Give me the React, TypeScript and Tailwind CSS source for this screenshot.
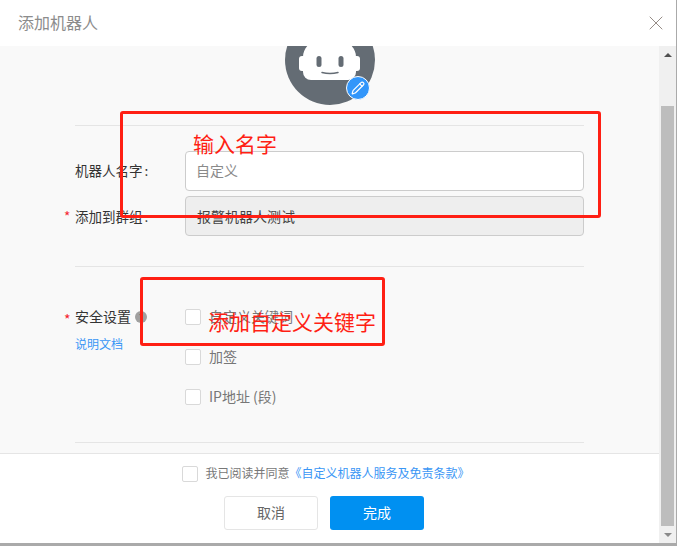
import React from 'react';
import { Pencil, X } from 'lucide-react';

const cjk = { fontFamily: '"Noto Sans CJK SC", "Noto Sans", sans-serif' };

function Robot() {
  return (
    <svg width="90" height="90" viewBox="0 0 90 90" className="block">
      <circle cx="45" cy="45" r="45" fill="#646c74" />
      <rect x="14" y="41" width="61" height="15" rx="3" fill="#fff" />
      <path
        d="M18 42C18 32 28 22 44.500 22C61 22 71 32 71 42V57a8 8 0 0 1-8 8H26a8 8 0 0 1-8-8z"
        fill="#fff"
      />
      <rect x="31.500" y="41" width="5" height="11" rx="2.500" fill="#646c74" />
      <rect x="53.500" y="41" width="5" height="11" rx="2.500" fill="#646c74" />
      <path d="M37 57.500c5 1.300 11 1.300 16 0" stroke="#646c74" strokeWidth="1.500" fill="none" strokeLinecap="round" />
    </svg>
  );
}

function Check({ label }: { label: string }) {
  return (
    <label className="flex items-center h-4 text-[14px] text-[#777] whitespace-nowrap">
      <span className="w-4 h-4 mr-2 bg-white border border-[#d9d9d9] rounded-[2px]" />
      <span className="-mt-[2px]">{label}</span>
    </label>
  );
}

export default function App() {
  return (
    <div className="relative w-[677px] h-[546px] overflow-hidden bg-[#aaaaaa]" style={cjk}>
      <div className="flex flex-col w-[676px] h-[543px] bg-white">
        <header className="flex items-center justify-between h-[46px] shrink-0 pl-[18px] pr-[8px] bg-white">
          <h1 className="text-[16px] font-normal text-[#8c8c8c] -mt-[2px]">添加机器人</h1>
          <X size={24} strokeWidth={0.9} className="text-[#8a7f78]" />
        </header>

        <div className="flex flex-1 min-h-0">
          <div className="flex flex-col flex-1 min-w-0">
            <main className="h-[407px] overflow-hidden bg-[#f9f9f9] px-[75px]">
              <div className="relative w-[90px] h-[90px] mx-auto -mt-[31px] left-[0.5px]">
                <Robot />
                <span className="absolute left-[61px] top-[61px] flex items-center justify-center w-6 h-6 rounded-full bg-[#3296fa] border border-white">
                  <Pencil size={14} strokeWidth={2} className="text-white" />
                </span>
              </div>

              <hr className="mt-[20px] w-[509px] border-[#e5e5e5]" />

              <div className="flex flex-col gap-[5px] w-[509px] mt-[25px]">
                <div className="flex items-center">
                  <span className="w-[110px] -mt-[2px] text-[13.500px] text-[#333]">机器人名字<span className="ml-[2px]">:</span></span>
                  <div className="flex items-center flex-1 h-[40px] px-[10px] pb-[2px] bg-white border border-[#cccccc] rounded-[4px] text-[14px] text-[#8a8a8a]">
                    自定义
                  </div>
                </div>
                <div className="flex items-center">
                  <span className="relative w-[110px] text-[13.500px] text-[#333]">
                    <span className="absolute -left-[11px] top-0 text-[#f5222d]">*</span>
                    添加到群组<span className="ml-[2px]">:</span>
                  </span>
                  <div className="flex items-center flex-1 h-[40px] px-[11px] bg-[#eeeeee] border border-[#cccccc] rounded-[4px] text-[14px] text-[#444]">
                    报警机器人测试
                  </div>
                </div>
              </div>

              <hr className="mt-[30px] w-[509px] border-[#e5e5e5]" />

              <div className="flex w-[509px] mt-[42px]">
                <div className="w-[110px]">
                  <div className="relative flex items-center h-4 text-[14px] text-[#333]">
                    <span className="absolute -left-[11px] top-0 text-[#f5222d]">*</span>
                    <span className="-mt-[1px]">安全设置</span>
                    <span className="flex items-center justify-center w-3 h-3 ml-[4px] rounded-full bg-[#a0a0a0] text-[9px] leading-none text-[#666]">?</span>
                  </div>
                  <a className="block mt-[11px] text-[12px] leading-4 text-[#3a96f5]">说明文档</a>
                </div>
                <div className="flex flex-col gap-6">
                  <Check label="自定义关键词" />
                  <Check label="加签" />
                  <Check label="IP地址 (段)" />
                </div>
              </div>

              <hr className="mt-[37px] w-[509px] border-[#e5e5e5]" />
            </main>

            <footer className="flex flex-col items-center flex-1 bg-white border-t border-[#e5e5e5]">
              <div className="flex items-center h-4 mt-[12px] -ml-[7px] text-[12px] text-[#777]">
                <span className="w-4 h-4 mr-[7px] bg-white border border-[#d9d9d9] rounded-[2px]" />
                <span className="-mt-[2px]">我已阅读并同意</span>
                <a className="-mt-[2px] text-[#3a96f5]">《自定义机器人服务及免责条款》</a>
              </div>
              <div className="flex gap-3 mt-[14px] -ml-[11px]">
                <button className="w-[94px] h-[34px] pb-[2px] bg-white border border-[#e5e5e5] rounded-[3px] text-[14px] text-[#666]">
                  取消
                </button>
                <button className="w-[94px] h-[34px] pb-[2px] bg-[#0090f1] rounded-[3px] text-[14px] text-white">
                  完成
                </button>
              </div>
            </footer>
          </div>

          <aside className="flex flex-col items-center w-[17px] shrink-0 bg-[#f0f0f0]">
            <div className="flex justify-center h-[60px] w-full shrink-0">
              <span className="mt-[7px] w-0 h-0 border-x-[4px] border-x-transparent border-b-[4px] border-b-[#505050]" />
            </div>
            <div className="w-[13px] flex-1 bg-[#bdbdbd]" />
            <div className="flex justify-center h-[17px] w-full shrink-0">
              <span className="mt-[7px] w-0 h-0 border-x-[4px] border-x-transparent border-t-[4px] border-t-[#8a8a8a]" />
            </div>
          </aside>
        </div>
      </div>

      <div className="absolute left-[120px] top-[111px] w-[481px] h-[107px] border-[3px] border-[#ff1f14] rounded-[3px]">
        <span className="absolute left-[70px] top-[15px] text-[21px] leading-[28px] text-[#ff1f14]">输入名字</span>
      </div>
      <div className="absolute left-[140px] top-[277px] w-[245px] h-[69px] border-[3px] border-[#ff1f14] rounded-[3px]">
        <span className="absolute left-[65px] top-[27px] text-[21px] leading-[28px] whitespace-nowrap text-[#ff1f14]">添加自定义关键字</span>
      </div>
    </div>
  );
}
